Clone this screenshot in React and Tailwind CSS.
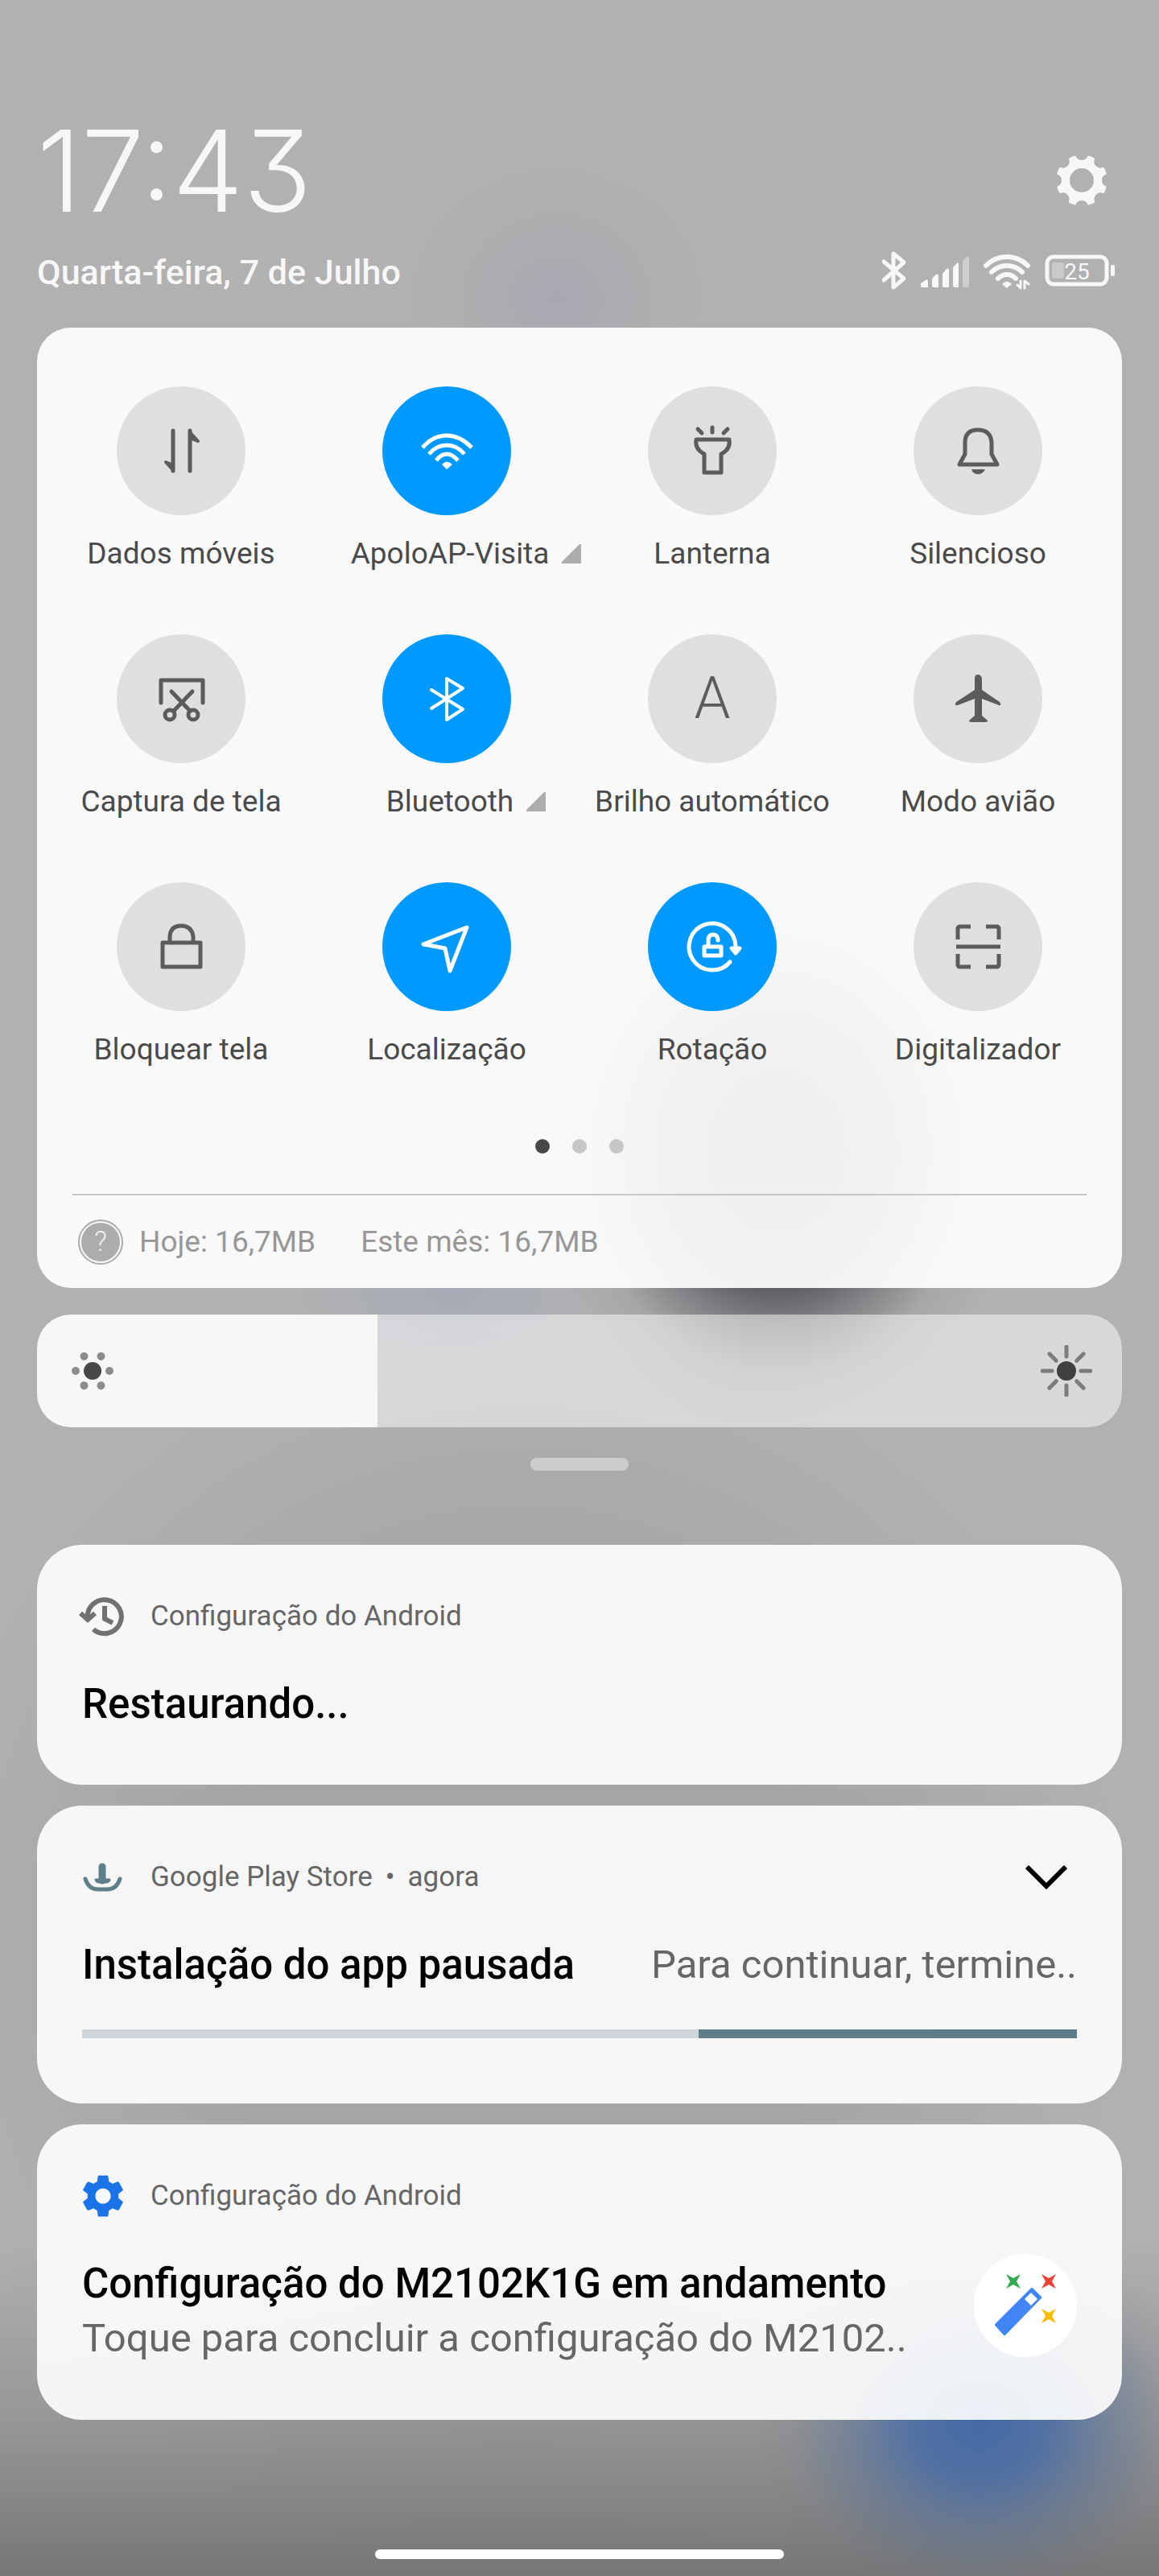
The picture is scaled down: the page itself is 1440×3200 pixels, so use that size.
// src/App.jsx
import { useState } from 'react';
import { MdSettings } from 'react-icons/md';

const stroke = {
  fill: 'none',
  stroke: 'currentColor',
  strokeWidth: 5,
  strokeLinecap: 'round',
  strokeLinejoin: 'round',
};

// Tile drawings share a 160x160 box, the size of the round button
const tileIcons = {
  data: (
    <g {...stroke}>
      <path d="M70 55V105M91 105V55" />
      <path d="M70 104L61 94L68 97ZM91 57L101 68L93 65Z" fill="currentColor" strokeWidth="4" />
    </g>
  ),
  wifi: (
    <g {...stroke} strokeLinecap="butt">
      <path d="M50 76Q63 61 80 61T111 76" />
      <path d="M58 84Q67 73 80 73T102 84" />
      <path d="M67 92Q73 84 80 84T94 92" />
      <path d="M74 97Q80 90 87 97L80 103Z" fill="currentColor" stroke="none" />
    </g>
  ),
  torch: (
    <g {...stroke}>
      <path d="M80 51V57M62 53L67 58M99 53L94 58" />
      <path d="M60 66H101Q103 78 91 84V107H70V84Q58 78 60 66Z" />
    </g>
  ),
  bell: (
    <g {...stroke}>
      <path d="M64 70Q64 54 80 54T97 70V84L104 97H57L64 84Z" />
      <path d="M72 103H89Q86 109 80 109T72 103Z" fill="currentColor" stroke="none" />
    </g>
  ),
  capture: (
    <g {...stroke}>
      <path d="M55 85V57H107V85M68 71L91 95M94 71L71 95" />
      <circle cx="66" cy="100" r="6" />
      <circle cx="95" cy="100" r="6" />
    </g>
  ),
  bluetooth: (
    <path {...stroke} strokeWidth="4" d="M61 69L100 93L80 106V55L100 67L61 92" />
  ),
  plane: (
    <path
      fill="currentColor"
      d="M76 55Q76 50 80 50T85 55V69L107 84Q110 89 106 88L85 80V101L92 107Q92 109 90 109H71Q69 109 69 107L76 101V80L55 88Q50 89 53 84L76 69Z"
    />
  ),
  lock: (
    <path {...stroke} d="M57 75H104V105H57ZM66 75V67Q67 54 80 54T95 67V75" />
  ),
  location: <path {...stroke} d="M105 56L51 77L78 82L84 110Z" />,
  rotation: (
    <g {...stroke}>
      <path d="M102 99A29 29 0 1 1 109 79" />
      <path d="M104 82H114L109 88Z" fill="currentColor" />
      <path d="M70 80H91V91H70ZM75 79V72Q75 65 81 65T87 72" />
    </g>
  ),
  scan: (
    <path
      {...stroke}
      strokeLinecap="butt"
      d="M55 71V58Q55 55 58 55H71M90 55H103Q106 55 106 58V71M106 89V102Q106 105 103 105H90M71 105H58Q55 105 55 102V89M53 80H108"
    />
  ),
};

const initialTiles = [
  { id: 'data', label: 'Dados móveis', on: false },
  { id: 'wifi', label: 'ApoloAP-Visita', on: true, expandable: true },
  { id: 'torch', label: 'Lanterna', on: false },
  { id: 'bell', label: 'Silencioso', on: false },
  { id: 'capture', label: 'Captura de tela', on: false },
  { id: 'bluetooth', label: 'Bluetooth', on: true, expandable: true },
  { id: 'auto', label: 'Brilho automático', on: false },
  { id: 'plane', label: 'Modo avião', on: false },
  { id: 'lock', label: 'Bloquear tela', on: false },
  { id: 'location', label: 'Localização', on: true },
  { id: 'rotation', label: 'Rotação', on: true },
  { id: 'scan', label: 'Digitalizador', on: false },
];

const Tile = ({ tile, onToggle }) => (
  <button
    type="button"
    aria-pressed={tile.on}
    onClick={() => onToggle(tile.id)}
    className="flex flex-col items-center gap-6 min-w-0"
  >
    <span
      className={`flex size-40 items-center justify-center rounded-full ${
        tile.on ? 'bg-[#0099ff] text-white' : 'bg-[#dfdfdf] text-[#5c5c5c]'
      }`}
    >
      {tile.id === 'auto' ? (
        <span className="text-[72px] leading-none font-light">A</span>
      ) : (
        <svg viewBox="0 0 160 160" className="size-40" aria-hidden="true">
          {tileIcons[tile.id]}
        </svg>
      )}
    </span>
    <span className={`flex items-center gap-4 whitespace-nowrap ${tile.expandable ? 'pl-12' : ''}`}>
      <span className="text-[37px] leading-[48px] text-[#4a4a4a]">{tile.label}</span>
      {tile.expandable && (
        <svg viewBox="0 0 24 28" className="h-7 w-6 text-[#adadad]" aria-hidden="true">
          <path d="M22 2H24V26H0V24Z" fill="currentColor" />
        </svg>
      )}
    </span>
  </button>
);

const GearIcon = () => (
  <svg viewBox="-32 -32 64 64" className="size-16" aria-hidden="true">
    <mask id="gear-cut">
      <circle r="32" fill="white" />
      <circle r="15" fill="black" />
      {[0, 45, 90, 135, 180, 225, 270, 315].map(angle => (
        <circle key={angle} cx="33" r="8" fill="black" transform={`rotate(${angle})`} />
      ))}
    </mask>
    <circle r="32" fill="currentColor" mask="url(#gear-cut)" />
  </svg>
);

const StatusIcons = () => (
  <div className="flex items-center gap-[18px] pr-2 pb-1">
    <svg viewBox="0 0 30 48" className="h-12 w-[30px]" aria-label="Bluetooth">
      <path {...stroke} d="M2 13L27 34L14 45V3L27 14L2 36" />
    </svg>
    <svg viewBox="0 0 60 48" className="h-12 w-[60px]" aria-label="Sinal">
      <g fill="currentColor">
        <path d="M0 40L6 36Q9 34 9 38V45H2Q0 45 0 43Z" />
        <path d="M14 34L19 29Q22 28 22 31V45H16Q14 45 14 43Z" />
        <path d="M27 28L32 22Q35 20 35 24V45H29Q27 45 27 43Z" />
        <path d="M40 20L45 15Q47 13 47 17V45H42Q40 45 40 43Z" />
        <path d="M52 12L57 7Q60 6 60 9V45H54Q52 45 52 43Z" opacity="0.4" />
      </g>
    </svg>
    <svg viewBox="0 0 58 48" className="h-12 w-[58px]" aria-label="Wi-Fi">
      <path {...stroke} strokeWidth="6" d="M3 18Q14 7 29 7T55 18M10 26Q18 18 29 18T48 26M18 34Q23 29 29 29T40 34" />
      <path d="M23 41Q29 34 35 41L29 46Z" fill="currentColor" />
      <path {...stroke} strokeWidth="3" d="M46 37V46L42 42M51 46V37L56 41" />
    </svg>
    <svg viewBox="0 0 88 48" className="h-12 w-[88px]" aria-label="Bateria">
      <rect x="3" y="7" width="74" height="34" rx="8" fill="none" stroke="currentColor" strokeWidth="5" />
      <rect x="9" y="14" width="15" height="20" rx="3" fill="currentColor" opacity="0.35" />
      <rect x="82" y="17" width="5" height="14" rx="2" fill="currentColor" />
      <text x="40" y="35" textAnchor="middle" fontSize="28" fill="currentColor">25</text>
    </svg>
  </div>
);

const BrightnessSlider = () => {
  const [level, setLevel] = useState(314);
  const percent = level / 10;

  return (
    <div className="relative mt-[33px] flex">
      <input
        type="range"
        min="0"
        max="1000"
        value={level}
        aria-label="Brilho"
        onChange={e => setLevel(Number(e.target.value))}
        className="h-[140px] w-full cursor-pointer appearance-none rounded-[42px] [&::-webkit-slider-thumb]:appearance-none"
        style={{
          background: `linear-gradient(to right, #f7f7f7 ${percent}%, rgba(255,255,255,0.5) ${percent}%)`,
        }}
      />
      <div className="pointer-events-none absolute inset-0 flex items-center justify-between px-[37px]">
        <svg viewBox="-32 -32 64 64" className="size-16" aria-hidden="true">
          <circle r="11" fill="#484848" />
          {[0, 60, 120, 180, 240, 300].map(angle => (
            <circle key={angle} cx="21" r="5" fill="#8c8c8c" transform={`rotate(${angle})`} />
          ))}
        </svg>
        <svg viewBox="-32 -32 64 64" className="size-16" aria-hidden="true">
          <circle r="12" fill="#404040" />
          {[0, 45, 90, 135, 180, 225, 270, 315].map(angle => (
            <path
              key={angle}
              d="M18 0H30"
              stroke="#7c7c7c"
              strokeWidth="5"
              strokeLinecap="round"
              transform={`rotate(${angle})`}
            />
          ))}
        </svg>
      </div>
    </div>
  );
};

const Notification = ({ icon, app, time, action, children }) => (
  <article className="rounded-[56px] bg-white/90 px-14 pt-[61px]">
    <header className="flex h-14 items-center gap-[33px]">
      {icon}
      <p className="flex flex-1 gap-4 text-[35px] leading-[48px] text-[#666666]">
        <span>{app}</span>
        {time && <span>•</span>}
        {time && <span>{time}</span>}
      </p>
      {action}
    </header>
    {children}
  </article>
);

const HistoryIcon = () => (
  <svg viewBox="4 0 52 56" className="h-14 w-[52px] overflow-visible text-[#717171]" aria-hidden="true">
    <g {...stroke} strokeWidth="6" strokeLinecap="butt" strokeLinejoin="miter">
      <path d="M11 31A21 21 0 1 1 18 44" />
      <path d="M2 24L11 32L20 24M32 15V31L42 36" />
    </g>
  </svg>
);

const InstallIcon = () => (
  <svg viewBox="0 0 52 56" className="h-14 w-[52px] text-[#5f7f8b]" aria-hidden="true">
    <g {...stroke}>
      <path d="M4 30Q8 43 20 43H31Q43 43 47 30" />
      <path d="M25 15V32" strokeWidth="9" />
      <path d="M17 31Q18 34 21 34H30Q33 34 34 31Z" fill="currentColor" strokeWidth="3" />
    </g>
  </svg>
);

const WandIcon = () => {
  const star = 'M-9 -9L0 -4L9 -9L4 0L9 9L0 4L-9 9L-4 0Z';
  return (
    <svg viewBox="0 0 128 128" className="size-32 shrink-0 rounded-full bg-white" aria-hidden="true">
      <path d={star} fill="#34a853" transform="translate(49 34)" />
      <path d={star} fill="#ea4335" transform="translate(93 34)" />
      <path d={star} fill="#fbbc04" transform="translate(93 77)" />
      <path
        d="M28 88L72 44L82 54L38 99Z"
        fill="#4285f4"
        stroke="#4285f4"
        strokeWidth="4"
        strokeLinejoin="round"
      />
      <path d="M63 56L71 48L79 56L71 64Z" fill="white" />
    </svg>
  );
};

const App = () => {
  const [tiles, setTiles] = useState(initialTiles);

  const toggleTile = (id) => {
    setTiles(prev => prev.map(tile => (tile.id === id ? { ...tile, on: !tile.on } : tile)));
  };

  return (
    <div className="flex min-h-screen flex-col bg-[#b1b1b1] bg-[radial-gradient(290px_240px_at_84.5%_3010px,#446aa6_0%,rgba(70,107,166,0.85)_28%,rgba(80,110,155,0.45)_55%,rgba(100,115,140,0.12)_80%,rgba(100,115,140,0)_100%),radial-gradient(300px_350px_at_67%_1430px,#3c3d43_0%,rgba(60,62,68,0.85)_42%,rgba(80,82,88,0.5)_62%,rgba(110,110,112,0.15)_80%,rgba(120,120,120,0)_100%),radial-gradient(190px_170px_at_48%_370px,rgba(160,162,178,0.6)_0%,rgba(165,165,176,0.3)_50%,rgba(170,170,180,0)_100%),radial-gradient(200px_130px_at_39%_1600px,rgba(160,168,185,0.7)_0%,rgba(165,170,180,0)_100%),linear-gradient(to_bottom,rgba(118,118,118,0)_2780px,rgba(118,118,118,0.45)_3010px,rgba(118,118,118,1)_3200px),radial-gradient(760px_780px_at_45%_2420px,rgba(160,160,160,0.8)_0%,rgba(160,160,160,0.6)_60%,rgba(177,177,177,0)_100%)] px-[46px] font-[Roboto,sans-serif] text-[#f7f7f7]">
      <header>
        <div className="flex items-end justify-between pt-[124px] pr-[18px]">
          <h1 className="font-[Inter,sans-serif] text-[140px] leading-[176px] font-light [font-feature-settings:'cv09']">
            17:43
          </h1>
          <button type="button" aria-label="Configurações" className="pb-11">
            <GearIcon />
          </button>
        </div>
        <div className="flex items-center justify-between pt-3 pb-[43px]">
          <p className="text-[43px] leading-[52px] font-medium">Quarta-feira, 7 de Julho</p>
          <StatusIcons />
        </div>
      </header>

      <section className="rounded-[42px] bg-white/92 pt-[73px]">
        <div className="grid grid-cols-4 gap-y-[76px] px-[14px]">
          {tiles.map(tile => (
            <Tile key={tile.id} tile={tile} onToggle={toggleTile} />
          ))}
        </div>
        <div className="mt-[87px] flex justify-center gap-7">
          <span className="size-[18px] rounded-full bg-[#484848]" />
          <span className="size-[18px] rounded-full bg-[#c6c6c6]" />
          <span className="size-[18px] rounded-full bg-[#c6c6c6]" />
        </div>
        <div className="mx-[44px] mt-[50px] flex items-center border-t-2 border-[#c8c8c8] px-[7px] pt-[30px] pb-[29px] text-[37px] leading-[48px] text-[#979797]">
          <span className="flex size-14 items-center justify-center rounded-full border-2 border-[#acacac] p-[2px]">
            <span className="flex size-full items-center justify-center rounded-full bg-[#acacac] text-[35px] font-light text-[#eeeeee]">
              ?
            </span>
          </span>
          <span className="ml-5">Hoje: 16,7MB</span>
          <span className="ml-14">Este mês: 16,7MB</span>
        </div>
      </section>

      <BrightnessSlider />
      <div className="mt-[38px] h-4 w-[122px] self-center rounded-full bg-[#cccccc]" />

      <main className="mt-[92px] flex flex-col gap-[26px]">
        <Notification icon={<HistoryIcon />} app="Configuração do Android">
          <h2 className="mt-[49px] pb-[68px] text-[51px] leading-[64px] font-medium text-black">Restaurando...</h2>
        </Notification>

        <Notification
          icon={<InstallIcon />}
          app="Google Play Store"
          time="agora"
          action={
            <button type="button" aria-label="Expandir" className="pr-3 text-black">
              <svg viewBox="0 0 52 32" className="h-8 w-[52px]" aria-hidden="true">
                <path d="M2 3L26 27L50 3" fill="none" stroke="currentColor" strokeWidth="6" />
              </svg>
            </button>
          }
        >
          <div className="mt-[49px] flex justify-between whitespace-nowrap leading-[64px]">
            <h2 className="text-[51px] font-medium text-black">Instalação do app pausada</h2>
            <p className="text-[49px] text-[#666666]">Para continuar, termine..</p>
          </div>
          <div role="progressbar" aria-label="Instalação" className="mt-12 mb-[81px] flex justify-end bg-[#cfd6d9]">
            <div className="h-[11px] w-[38%] bg-[#5f7d88]" />
          </div>
        </Notification>

        <Notification
          icon={
            <span className="flex w-[52px] justify-center text-[#1a73e8]">
              <MdSettings className="size-16 shrink-0" />
            </span>
          }
          app="Configuração do Android"
        >
          <div className="mt-[44px] flex items-start justify-between pb-[69px]">
            <div className="pt-[5px] whitespace-nowrap leading-[64px]">
              <h2 className="text-[51px] font-medium text-black">Configuração do M2102K1G em andamento</h2>
              <p className="mt-1 text-[49px] text-[#666666]">Toque para concluir a configuração do M2102..</p>
            </div>
            <WandIcon />
          </div>
        </Notification>
      </main>

      <div className="mt-auto mb-[21px] h-3 w-[508px] self-center rounded-full bg-white" />
    </div>
  );
};

export default App;
